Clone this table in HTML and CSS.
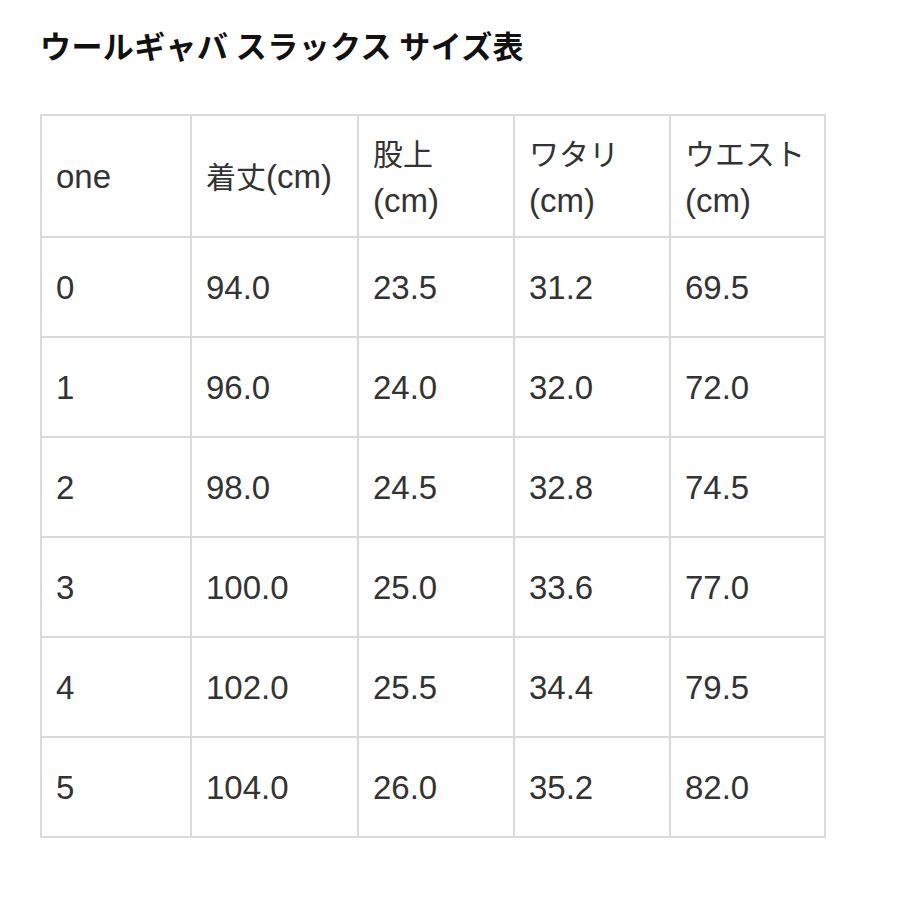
FILE: index.html
```html
<!DOCTYPE html>
<html lang="ja">
<head>
<meta charset="utf-8">
<link rel="stylesheet" href="styles.css">
</head>
<body>
<div class="page">
  <h1 class="title">ウールギャバ スラックス サイズ表</h1>
  <table class="size-table">
    <colgroup>
      <col class="c1"><col class="c2"><col class="c3"><col class="c4"><col class="c5">
    </colgroup>
    <thead>
      <tr class="head-row">
        <th>one</th>
        <th><span class="jp">着丈</span>(cm)</th>
        <th><span class="jp">股上</span><br>(cm)</th>
        <th><span class="jp">ワタリ</span><br>(cm)</th>
        <th><span class="jp">ウエスト</span><br>(cm)</th>
      </tr>
    </thead>
    <tbody>
      <tr><td>0</td><td>94.0</td><td>23.5</td><td>31.2</td><td>69.5</td></tr>
      <tr><td>1</td><td>96.0</td><td>24.0</td><td>32.0</td><td>72.0</td></tr>
      <tr><td>2</td><td>98.0</td><td>24.5</td><td>32.8</td><td>74.5</td></tr>
      <tr><td>3</td><td>100.0</td><td>25.0</td><td>33.6</td><td>77.0</td></tr>
      <tr><td>4</td><td>102.0</td><td>25.5</td><td>34.4</td><td>79.5</td></tr>
      <tr><td>5</td><td>104.0</td><td>26.0</td><td>35.2</td><td>82.0</td></tr>
    </tbody>
  </table>
</div>
</body>
</html>
```
FILE: styles.css
```css
html, body {
  margin: 0;
  padding: 0;
  background: #ffffff;
}
.page {
  padding: 24px 40px;
}
.title {
  margin: 0 0 48px;
  font-family: "Noto Sans CJK JP", "Liberation Sans", sans-serif;
  font-weight: 700;
  font-size: 31px;
  line-height: 42px;
  color: #111111;
  letter-spacing: 0.4px;
}
.size-table {
  border-collapse: collapse;
  table-layout: fixed;
  width: 784px;
  font-family: "Liberation Sans", "Noto Sans CJK JP", sans-serif;
  font-size: 33px;
  line-height: 47px;
  color: #333333;
}
.c1 { width: 150px; }
.c2 { width: 167px; }
.c3 { width: 156px; }
.c4 { width: 156px; }
.c5 { width: 155px; }
.size-table th,
.size-table td {
  border: 2px solid #dadada;
  padding: 0 0 0 14px;
  text-align: left;
  vertical-align: middle;
  font-weight: 400;
  height: 98px;
}
.size-table .head-row th {
  height: 120px;
}
.jp {
  font-family: "Noto Sans CJK JP", sans-serif;
  font-size: 30px;
}
```
